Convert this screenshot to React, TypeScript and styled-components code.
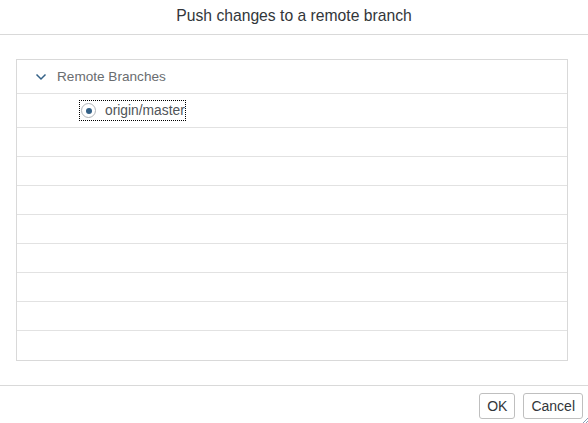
import React, { useState } from 'react';
import styled, { createGlobalStyle } from 'styled-components';

const GlobalStyle = createGlobalStyle`
  html, body {
    margin: 0;
    padding: 0;
    background: #ffffff;
  }
  body {
    font-family: 'Liberation Sans', Arial, sans-serif;
  }
`;

const Dialog = styled.div`
  width: 588px;
  height: 423px;
  display: flex;
  flex-direction: column;
  background: #ffffff;
  position: relative;
  overflow: hidden;
`;

const Header = styled.div`
  height: 35px;
  display: flex;
  align-items: center;
  justify-content: center;
  border-bottom: 1px solid #d9d9d9;
  box-sizing: border-box;
  padding-bottom: 3px;
`;

const Title = styled.h1`
  margin: 0;
  font-size: 15.7px;
  font-weight: 400;
  color: #32363a;
`;

const Content = styled.div`
  flex: 1;
  padding: 24px 20px 23px 16px;
`;

const Tree = styled.div`
  border: 1px solid #d9d9d9;
  display: flex;
  flex-direction: column;
`;

const Row = styled.div<{ $tall?: boolean; $indent?: number }>`
  height: ${({ $tall }) => ($tall ? '34px' : '29px')};
  display: flex;
  align-items: center;
  padding-left: ${({ $indent }) => $indent ?? 0}px;
  border-bottom: 1px solid #e2e2e2;
  box-sizing: border-box;
  font-size: 13.6px;
  color: #6a6d70;

  &:last-child {
    border-bottom: none;
  }
`;

const Chevron = styled.button`
  width: 12px;
  height: 14px;
  margin-right: 10px;
  padding: 0;
  border: none;
  background: none;
  display: flex;
  align-items: center;
  justify-content: center;
  cursor: pointer;
`;

const RadioLabel = styled.label`
  display: flex;
  align-items: center;
  gap: 9px;
  padding: 2px 0 2px 1px;
  outline: 1px dotted #000;
  outline-offset: 0;
  color: #515559;
  font-size: 13.8px;
  cursor: pointer;
`;

const RadioOuter = styled.span<{ $checked: boolean }>`
  width: 15px;
  height: 15px;
  box-sizing: border-box;
  border-radius: 50%;
  border: 1.5px solid #b0b4b8;
  display: flex;
  align-items: center;
  justify-content: center;

  &::after {
    content: '';
    width: 6px;
    height: 6px;
    border-radius: 50%;
    background: ${({ $checked }) => ($checked ? '#346187' : 'transparent')};
  }
`;

const Footer = styled.div`
  height: 38px;
  border-top: 1px solid #d9d9d9;
  box-sizing: border-box;
  display: flex;
  justify-content: flex-end;
  align-items: flex-start;
  gap: 8px;
  padding: 7px 5px 0 0;
`;

const Button = styled.button`
  height: 26px;
  padding: 0 7px;
  font-family: 'Liberation Sans', Arial, sans-serif;
  font-size: 14px;
  color: #32363a;
  background: #ffffff;
  border: 1px solid #bfbfbf;
  border-radius: 3px;
  cursor: pointer;
`;

const Grip = styled.svg`
  position: absolute;
  right: 0;
  bottom: 0;
`;

export default function App() {
  const [open, setOpen] = useState(true);
  const [checked, setChecked] = useState(true);
  const emptyRows = Array.from({ length: 8 });

  return (
    <Dialog>
      <GlobalStyle />
      <Header>
        <Title>Push changes to a remote branch</Title>
      </Header>
      <Content>
        <Tree>
          <Row $tall $indent={18}>
            <Chevron onClick={() => setOpen(!open)}>
              <svg width="12" height="12" viewBox="0 0 12 12">
                <path d={open ? 'M1.5 3.5 L6 8 L10.5 3.5' : 'M4 1.5 L8.5 6 L4 10.5'} fill="none" stroke="#346187" strokeWidth="1.5" />
              </svg>
            </Chevron>
            Remote Branches
          </Row>
          <Row $tall $indent={63}>
            <RadioLabel onClick={() => setChecked(true)}>
              <RadioOuter $checked={checked} />
              origin/master
            </RadioLabel>
          </Row>
          {emptyRows.map((_, i) => (
            <Row key={i} />
          ))}
        </Tree>
      </Content>
      <Footer>
        <Button>OK</Button>
        <Button>Cancel</Button>
      </Footer>
      <Grip width="5" height="5" viewBox="0 0 5 5">
        <path d="M5 0 L0 5 M5 3 L3 5" stroke="#8aa0b8" strokeWidth="1" />
      </Grip>
    </Dialog>
  );
}
